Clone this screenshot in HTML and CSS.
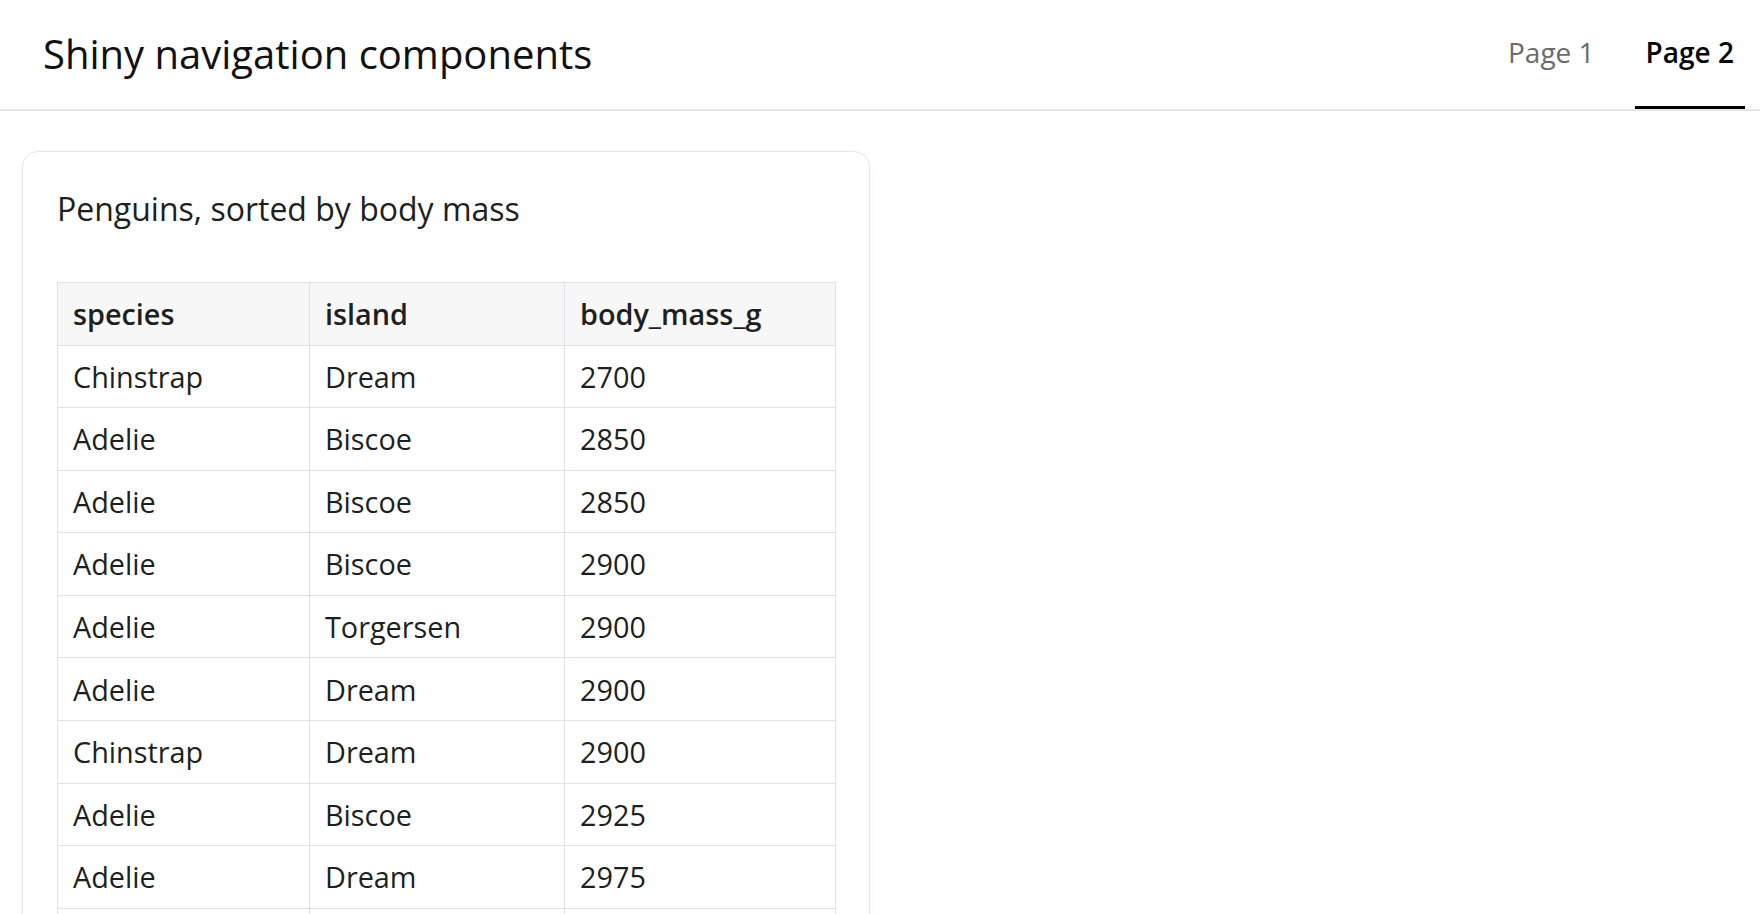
FILE: index.html
```html
<!DOCTYPE html>
<html lang="en">
<head>
<meta charset="utf-8">
<title>Shiny navigation components</title>
<link rel="stylesheet" href="styles.css">
</head>
<body>
<header class="navbar">
  <div class="brand">Shiny navigation components</div>
  <nav class="nav">
    <a class="nav-link" href="#">Page 1</a>
    <a class="nav-link active" href="#">Page 2</a>
  </nav>
</header>
<main class="content">
  <section class="card">
    <div class="card-title">Penguins, sorted by body mass</div>
    <table class="data-table">
      <colgroup>
        <col class="c1"><col class="c2"><col class="c3">
      </colgroup>
      <thead>
        <tr><th>species</th><th>island</th><th>body_mass_g</th></tr>
      </thead>
      <tbody>
        <tr><td>Chinstrap</td><td>Dream</td><td>2700</td></tr>
        <tr><td>Adelie</td><td>Biscoe</td><td>2850</td></tr>
        <tr><td>Adelie</td><td>Biscoe</td><td>2850</td></tr>
        <tr><td>Adelie</td><td>Biscoe</td><td>2900</td></tr>
        <tr><td>Adelie</td><td>Torgersen</td><td>2900</td></tr>
        <tr><td>Adelie</td><td>Dream</td><td>2900</td></tr>
        <tr><td>Chinstrap</td><td>Dream</td><td>2900</td></tr>
        <tr><td>Adelie</td><td>Biscoe</td><td>2925</td></tr>
        <tr><td>Adelie</td><td>Dream</td><td>2975</td></tr>
        <tr><td>Adelie</td><td>Biscoe</td><td>3000</td></tr>
        <tr><td>Adelie</td><td>Dream</td><td>3000</td></tr>
      </tbody>
    </table>
  </section>
</main>
</body>
</html>
```
FILE: styles.css
```css
* { box-sizing: border-box; }

html, body {
  margin: 0;
  padding: 0;
  background: #ffffff;
  font-family: "Open Sans", "Liberation Sans", sans-serif;
  color: #1d1f21;
}

.navbar {
  display: flex;
  justify-content: space-between;
  align-items: flex-start;
  height: 111px;
  padding: 0 15px 0 43px;
  border-bottom: 2px solid #e6e6e6;
}

.brand {
  padding-top: 28.5px;
  font-size: 40px;
  line-height: 50px;
  color: #111111;
  white-space: nowrap;
}

.nav {
  display: flex;
  gap: 29px;
  height: 109px;
}

.nav-link {
  display: block;
  padding: 32px 11px 0;
  height: 109px;
  font-size: 28px;
  line-height: 40px;
  color: #6b6b6b;
  text-decoration: none;
  border-bottom: 3.5px solid transparent;
}

.nav-link.active {
  color: #000000;
  font-weight: 600;
  border-bottom-color: #000000;
}

.content {
  padding: 40px 0 0 22px;
}

.card {
  width: 848px;
  padding: 37.6px 34px 20px;
  border: 1px solid #e7e7e7;
  border-radius: 16px;
  background: #ffffff;
  box-shadow: 0 2px 6px rgba(0, 0, 0, 0.06);
}

.card-title {
  font-size: 32px;
  line-height: 38px;
  color: #1d1f21;
  margin-bottom: 54.4px;
}

.data-table {
  width: 100%;
  border-collapse: collapse;
  table-layout: fixed;
  font-size: 28.8px;
  line-height: 43.2px;
}

.data-table .c1 { width: 252px; }
.data-table .c2 { width: 255px; }
.data-table .c3 { width: 271px; }

.data-table th,
.data-table td {
  border: 1px solid #dee2e6;
  padding: 9.2px 15px;
  text-align: left;
  white-space: nowrap;
}

.data-table th {
  background: #f7f7f7;
  font-weight: 600;
  color: #1d1f21;
}

.data-table td {
  font-weight: 400;
  color: #1d1f21;
}
```
